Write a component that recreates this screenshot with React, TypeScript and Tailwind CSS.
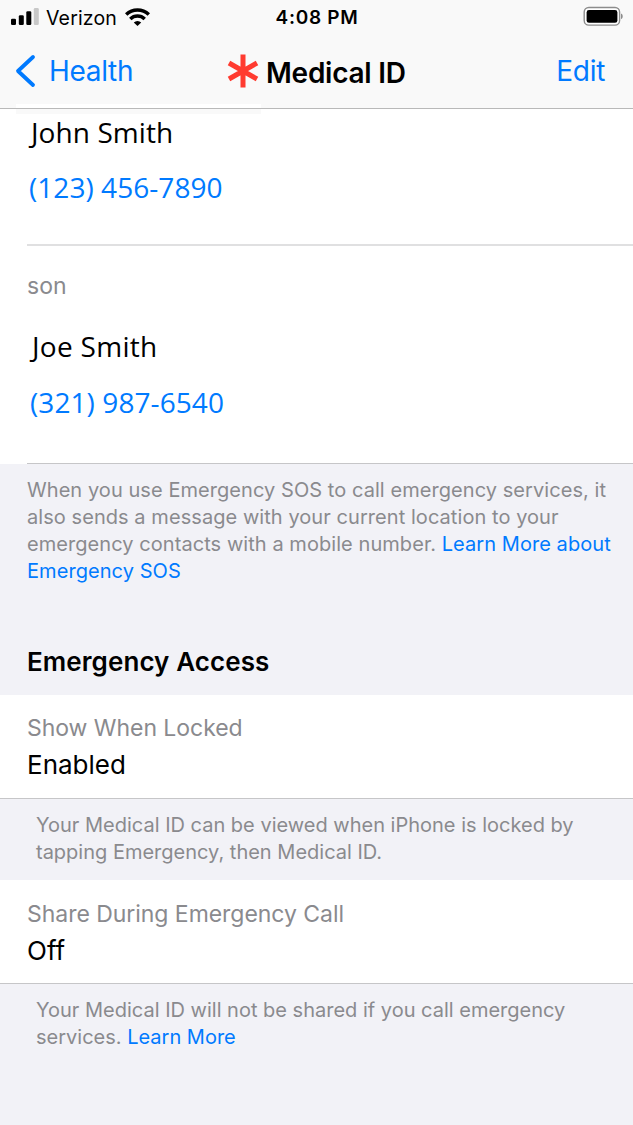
import type { ReactNode } from 'react';

function StatusBar() {
  return (
    <div className="grid h-[35px] grid-cols-[1fr_auto_1fr] items-start pl-[11px] pr-[9px] text-black">
      <div className="flex items-start">
        <svg width="28" height="18" viewBox="0 0 28 18" className="mt-[8px]">
          <rect x="0" y="10.7" width="5" height="6.3" rx="1.3" />
          <rect x="7.8" y="7.2" width="5" height="9.8" rx="1.3" />
          <rect x="15.3" y="3.2" width="5" height="13.8" rx="1.3" />
          <rect x="22.8" y="0" width="5" height="17" rx="1.3" fill="#c8c8c8" />
        </svg>
        <span className="ml-[7px] mt-[6px] text-[19.5px] leading-[24px] tracking-[0.15px]">Verizon</span>
        <svg width="25" height="18" viewBox="0 0 25 18" className="ml-[8px] mt-[8px]" fill="none" stroke="black" strokeWidth="3.5">
          <path d="M1.2 6.6 A16.4 16.4 0 0 1 23.8 6.6" />
          <path d="M5.3 10.9 A10.4 10.4 0 0 1 19.7 10.9" />
          <path d="M12.5 18 L8.8 14.4 A5.3 5.3 0 0 1 16.2 14.4 Z" fill="black" stroke="none" />
        </svg>
      </div>
      <span className="-ml-px mt-[6px] text-[19px] font-semibold leading-[24px] tracking-[0.7px]">4:08 PM</span>
      <svg width="41" height="20" viewBox="0 0 41 20" className="mt-[6px] justify-self-end">
        <rect x="1.2" y="1.5" width="35.4" height="17.6" rx="4.6" fill="white" stroke="#8c8c8c" strokeWidth="1.4" />
        <rect x="3.6" y="4" width="30.8" height="12.8" rx="2.4" />
        <path d="M38 7.5 C40.3 8.3 40.3 12.3 38 13.1 Z" fill="#8c8c8c" />
      </svg>
    </div>
  );
}

function NavBar() {
  return (
    <div className="flex h-[73px] items-start pl-[15px] pr-[28px] text-[28px] leading-[34px]">
      <svg width="21" height="34" viewBox="0 0 21 34" className="mt-[19px]" fill="none" stroke="#007aff" strokeWidth="3.8" strokeLinecap="round" strokeLinejoin="round">
        <path d="M18 3 L3 17 L18 31" />
      </svg>
      <span className="ml-[13px] mt-[19px] w-[84px] tracking-[-0.3px] text-[#007aff]">Health</span>
      <svg width="32" height="34" viewBox="-16 -17 32 34" className="ml-[94px] mt-[19px]" stroke="#ff3b30" strokeWidth="5">
        <path d="M0 -16.4 V16.4 M-14 -8 L14 8 M-14 8 L14 -8" />
      </svg>
      <span className="ml-[7px] mt-[21px] font-semibold tracking-[-0.25px]">Medical ID</span>
      <span className="ml-auto mt-[19px] tracking-[-0.3px] text-[#007aff]">Edit</span>
    </div>
  );
}

function Note({ className, children }: { className: string; children: ReactNode }) {
  return <p className={`whitespace-nowrap text-[20px] leading-[27px] text-[#8a8a8e] ${className}`}>{children}</p>;
}

function Setting({ label, value, className }: { label: string; value: string; className: string }) {
  return (
    <div className={`h-[104px] border-b border-[#c6c6c8] bg-white pl-[27px] ${className}`}>
      <div className="text-[23px] leading-[34px] tracking-[-0.04px] text-[#8a8a8e]">{label}</div>
      <div className="mt-px text-[26px] leading-[38px]">{value}</div>
    </div>
  );
}

export default function App() {
  return (
    <div className="h-[1125px] w-[633px] overflow-hidden bg-[#f2f2f7] font-['Inter',sans-serif] text-black">
      <header className="relative h-[109px] border-b border-[#b9b9b9] bg-[#f9f9f9]">
        <StatusBar />
        <NavBar />
        <div className="absolute left-[16px] top-[104px] h-[4px] w-[245px] bg-white" />
        <div className="absolute left-[16px] top-[109px] h-[5px] w-[245px] bg-[#f9f9f9]" />
      </header>

      <section className="h-[355px] bg-white pl-[27px]">
        <div className="h-[137px] border-b-2 border-[#e0e0e1] pt-[4px] font-['Open_Sans',sans-serif] text-[28px] leading-[38px]">
          <div className="pl-[4px] tracking-[0.08px]">John Smith</div>
          <div className="mt-[17px] pl-[2px] tracking-[0.05px] text-[#007aff]">(123) 456-7890</div>
        </div>
        <div className="h-[218px] border-b border-[#c6c6c8] pt-[23px]">
          <div className="text-[23px] leading-[34px] text-[#8a8a8e]">son</div>
          <div className="mt-[24px] pl-[5px] font-['Open_Sans',sans-serif] text-[28px] leading-[38px] tracking-[0.3px]">Joe Smith</div>
          <div className="mt-[18px] pl-[3px] font-['Open_Sans',sans-serif] text-[28px] leading-[38px] tracking-[0.08px] text-[#007aff]">(321) 987-6540</div>
        </div>
      </section>

      <Note className="h-[180px] pl-[27px] pt-[13px] tracking-[0.06px]">
        When you use Emergency SOS to call emergency services, it<br />
        also sends a message with your current location to your<br />
        emergency contacts with a mobile number. <a className="text-[#007aff]">Learn More about<br />Emergency SOS</a>
      </Note>
      <h2 className="h-[51px] pl-[27px] pt-px text-[26px] font-semibold leading-[34px] tracking-[0.08px]">Emergency Access</h2>
      <Setting label="Show When Locked" value="Enabled" className="pt-[16px]" />
      <Note className="h-[81px] pl-[36px] pt-[13px]">
        Your Medical ID can be viewed when iPhone is locked by<br />
        tapping Emergency, then Medical ID.
      </Note>
      <Setting label="Share During Emergency Call" value="Off" className="pt-[17px]" />
      <Note className="pl-[36px] pt-[13px]">
        Your Medical ID will not be shared if you call emergency<br />
        services. <a className="text-[#007aff]">Learn More</a>
      </Note>
    </div>
  );
}
